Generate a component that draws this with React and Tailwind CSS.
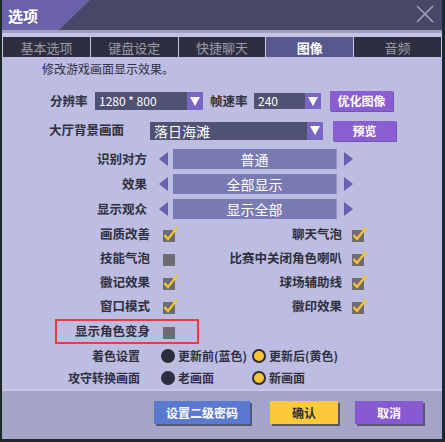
import React from 'react';

const font = "font-['Noto_Sans_CJK_SC','Noto_Sans',sans-serif]";

const tabs = ['基本选项', '键盘设定', '快捷聊天', '图像', '音频'];

const Check = ({ on }) => (
  <svg width="15" height="15" viewBox="0 0 15 15" className="shrink-0 overflow-visible">
    <rect x="0" y="3" width="12" height="12" fill="#6e6c72" />
    {on && (
      <path d="M1.5 8 L5 12 L14 0.5" fill="none" stroke="#f7c52a" strokeWidth="2.2" strokeLinejoin="miter" />
    )}
  </svg>
);

const Radio = ({ on }) =>
  on ? (
    <span className="w-[14px] h-[14px] rounded-full bg-[#f8c630] border-[2.5px] border-[#2c2c3a] shrink-0" />
  ) : (
    <span className="w-[14px] h-[14px] rounded-full bg-[#2c2c3a] shrink-0" />
  );

const DownArrow = () => (
  <span className="w-[16px] h-full bg-[#7866c2] flex items-center justify-center shrink-0">
    <svg width="10" height="9" viewBox="0 0 10 9">
      <path d="M0 0 H10 L5 9 Z" fill="#ffffff" />
    </svg>
  </span>
);

const Selector = ({ label, value }) => (
  <div className="flex items-center h-[20px]">
    <span className="w-[145px] text-right text-[12.5px] font-bold text-[#2f2f3e] leading-none">{label}</span>
    <svg width="9" height="14" viewBox="0 0 9 14" className="ml-[12px]">
      <path d="M9 0 V14 L0 7 Z" fill="#6a5fb0" />
    </svg>
    <div className="ml-[5px] w-[164px] h-full bg-[#7a7ab2] border-r border-[#9494c4] flex items-center justify-center text-white text-[14px] leading-none">
      {value}
    </div>
    <svg width="9" height="14" viewBox="0 0 9 14" className="ml-[7px]">
      <path d="M0 0 V14 L9 7 Z" fill="#6a5fb0" />
    </svg>
  </div>
);

const checks = [
  ['画质改善', true, '聊天气泡', true, 24],
  ['技能气泡', false, '比赛中关闭角色喇叭', true, 24],
  ['徽记效果', true, '球场辅助线', true, 24],
  ['窗口模式', true, '徽印效果', true, 25],
];

export default function App() {
  return (
    <div className={`w-[445px] h-[442px] bg-[#1c2829] ${font} overflow-hidden`}>
      <div className="ml-[2px] w-[440px] h-[439px] flex flex-col bg-[#bcbde1]">
        {/* Title bar */}
        <div className="relative h-[30px] bg-[#474868] flex items-center justify-between">
          <svg width="90" height="30" viewBox="0 0 90 30" className="absolute left-0 top-0">
            <path d="M0 0 H88 L57 30 H0 Z" fill="#6c62aa" />
          </svg>
          <span className="relative ml-[6px] text-white text-[15px] font-bold leading-none">选项</span>
          <svg width="18" height="18" viewBox="0 0 18 18" className="mr-[8px] mt-[-2px]">
            <path d="M1 1 L17 17 M17 1 L1 17" stroke="#a2a2c0" strokeWidth="1.6" />
          </svg>
        </div>
        <div className="h-[3px] bg-[#9e9fbd]" />
        <div className="h-[4px] bg-[#c4c4e6]" />

        {/* Tabs */}
        <div className="h-[20px] flex gap-[1px] px-[1px] bg-[#c4c4e6]">
          {tabs.map((t) => (
            <div
              key={t}
              className={`flex-1 flex items-center justify-center text-[13px] leading-none ${
                t === '图像' ? 'bg-[#58588e] text-white font-bold' : 'bg-[#2d2e40] text-[#9c9cac]'
              }`}
            >
              {t}
            </div>
          ))}
        </div>

        {/* Content */}
        <div className="h-[332px] flex flex-col text-[#2f2f3e]">
          <div className="pt-[5px] pl-[40px] text-[12px] leading-[14px]">修改游戏画面显示效果。</div>

          <div className="mt-[15px] h-[20px] flex items-center">
            <span className="ml-[48px] w-[45px] text-[12.5px] font-bold leading-none">分辨率</span>
            <div className="w-[108px] h-[18px] bg-[#4f5272] flex items-center justify-between">
              <span className="pl-[4px] text-white text-[12px] leading-none">1280 * 800</span>
              <DownArrow />
            </div>
            <span className="ml-[7px] w-[44px] text-[12.5px] font-bold leading-none">帧速率</span>
            <div className="w-[67px] h-[16px] bg-[#4f5272] flex items-center justify-between">
              <span className="pl-[4px] text-white text-[12px] leading-none">240</span>
              <DownArrow />
            </div>
            <button className="ml-[9px] w-[63px] h-[20px] bg-[#8a5dd2] shadow-[1px_1px_0_#6a5aa0] text-white text-[12px] font-bold leading-none">
              优化图像
            </button>
          </div>

          <div className="mt-[9px] h-[21px] flex items-center">
            <span className="ml-[47px] w-[101px] text-[12.5px] font-bold leading-none">大厅背景画面</span>
            <div className="w-[173px] h-[18px] bg-[#4f5272] flex items-center justify-between">
              <span className="pl-[4px] text-white text-[14px] leading-none">落日海滩</span>
              <DownArrow />
            </div>
            <button className="ml-[10px] w-[63px] h-[20px] bg-[#8a5dd2] shadow-[1px_1px_0_#6a5aa0] text-white text-[12px] font-bold leading-none">
              预览
            </button>
          </div>

          <div className="mt-[8px] flex flex-col gap-[5px]">
            <Selector label="识别对方" value="普通" />
            <Selector label="效果" value="全部显示" />
            <Selector label="显示观众" value="显示全部" />
          </div>

          <div className="mt-[3px] flex flex-col">
            {checks.map(([a, ao, b, bo, h]) => (
              <div key={a} className="flex items-center" style={{ height: h }}>
                <span className="w-[148px] text-right text-[12.5px] font-bold leading-none">{a}</span>
                <span className="ml-[13px]">
                  <Check on={ao} />
                </span>
                <span className="w-[164px] text-right text-[12.5px] font-bold leading-none">{b}</span>
                <span className="ml-[10px]">
                  <Check on={bo} />
                </span>
              </div>
            ))}
            <div className="h-[25px] flex items-center">
              <div className="ml-[53px] w-[144px] h-[25px] border-2 border-[#ee3a3c] flex items-center">
                <span className="w-[93px] text-right text-[12.5px] font-bold leading-none">显示角色变身</span>
                <span className="ml-[13px]">
                  <Check on={false} />
                </span>
              </div>
            </div>
          </div>

          <div className="mt-[1px] h-[22px] flex items-center text-[12px] font-bold leading-none">
            <span className="w-[138px] text-right">着色设置</span>
            <div className="ml-[21px] w-[91px] flex items-center gap-[3px]">
              <Radio on={false} />
              <span>更新前(蓝色)</span>
            </div>
            <div className="flex items-center gap-[3px]">
              <Radio on />
              <span>更新后(黄色)</span>
            </div>
          </div>
          <div className="h-[22px] flex items-center text-[12px] font-bold leading-none">
            <span className="w-[138px] text-right">攻守转换画面</span>
            <div className="ml-[21px] w-[91px] flex items-center gap-[3px]">
              <Radio on={false} />
              <span>老画面</span>
            </div>
            <div className="flex items-center gap-[3px]">
              <Radio on />
              <span>新画面</span>
            </div>
          </div>
        </div>

        {/* Footer */}
        <div className="flex-1 bg-[#a4a4c6] border-t-2 border-[#c6c6e4] flex items-start pt-[10px]">
          <button className="ml-[152px] w-[96px] h-[23px] bg-[#5a7ad2] shadow-[2px_2px_0_#56566e] text-white text-[12px] font-bold leading-none">
            设置二级密码
          </button>
          <button className="ml-[20px] w-[68px] h-[23px] bg-[#fbc93a] shadow-[2px_2px_0_#56566e] text-[#2c2c3a] text-[12px] font-bold leading-none">
            确认
          </button>
          <button className="ml-[17px] w-[68px] h-[23px] bg-[#885ad2] shadow-[2px_2px_0_#56566e] text-white text-[12px] font-bold leading-none">
            取消
          </button>
        </div>
      </div>
    </div>
  );
}
